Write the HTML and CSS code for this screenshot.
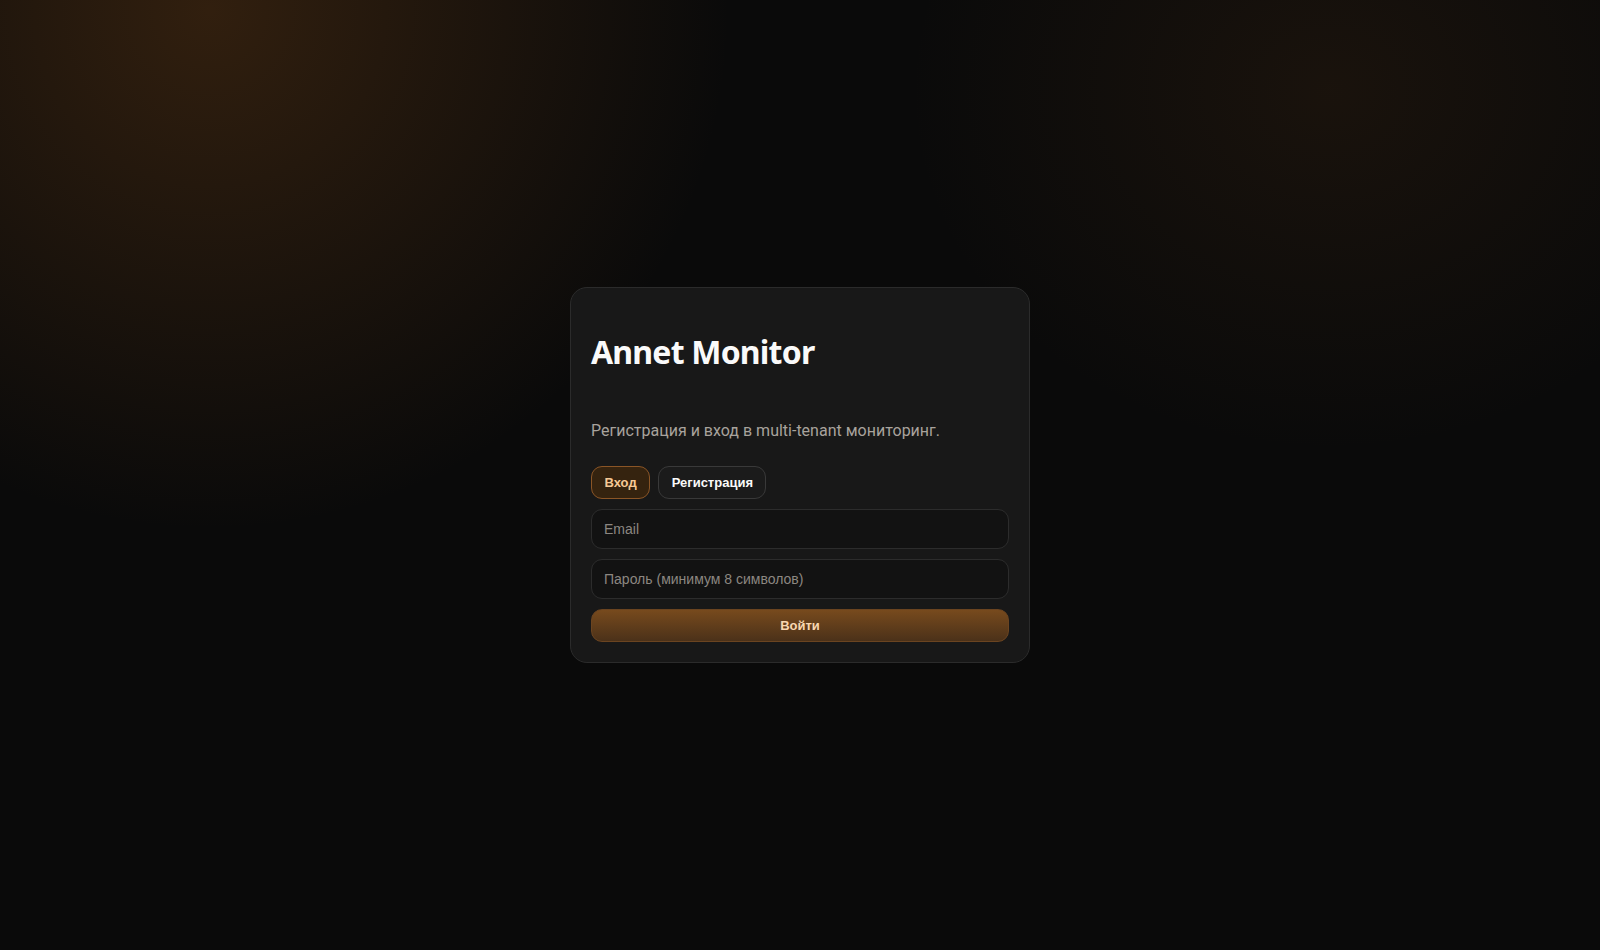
FILE: index.html
```html
<!DOCTYPE html>
<html lang="ru">
<head>
<meta charset="utf-8">
<title>Annet Monitor</title>
<link rel="stylesheet" href="styles.css">
</head>
<body>
<main class="page">
  <section class="card">
    <h1 class="title">Annet Monitor</h1>
    <p class="subtitle">Регистрация и вход в multi-tenant мониторинг.</p>
    <div class="tabs">
      <button class="tab tab-active" type="button">Вход</button>
      <button class="tab" type="button">Регистрация</button>
    </div>
    <form class="form">
      <input class="field" type="email" placeholder="Email">
      <input class="field" type="password" placeholder="Пароль (минимум 8 символов)">
      <button class="submit" type="button">Войти</button>
    </form>
  </section>
</main>
</body>
</html>
```
FILE: styles.css
```css
* { box-sizing: border-box; }
html, body { height: 100%; }
body {
  margin: 0;
  background-color: #0a0a0a;
  background-image:
    radial-gradient(ellipse 520px 520px at 210px 10px, rgba(140, 80, 25, 0.30), rgba(140, 80, 25, 0) 100%),
    radial-gradient(ellipse 420px 360px at 1330px 90px, rgba(120, 70, 25, 0.14), rgba(120, 70, 25, 0) 100%);
  font-family: Roboto, "Noto Sans", sans-serif;
  color: #f5f5f5;
}
.page {
  min-height: 100%;
  display: flex;
  justify-content: center;
  align-items: flex-start;
  padding-top: 287px;
}
.card {
  width: 460px;
  background: #181818;
  border: 1px solid #2b2b2b;
  border-radius: 17px;
  padding: 20px;
}
.title {
  margin: 22px 0 0;
  font-family: "Noto Sans", "Open Sans", sans-serif;
  font-size: 32px;
  line-height: 44px;
  font-weight: 700;
  letter-spacing: -0.8px;
  color: #fafafa;
}
.subtitle {
  margin: 45px 0 0;
  font-size: 16px;
  line-height: 24px;
  color: #a8a39d;
}
.tabs {
  display: flex;
  gap: 8px;
  margin-top: 23px;
}
.tab {
  height: 33px;
  padding: 0 12.5px;
  border-radius: 11px;
  border: 1px solid #393939;
  background: #1b1b1b;
  color: #fafafa;
  font-family: "Liberation Sans", Arial, sans-serif;
  font-weight: 700;
  font-size: 13px;
}
.tab-active {
  background: #35230f;
  border-color: #8a5526;
  color: #f6c995;
}
.form {
  display: flex;
  flex-direction: column;
  gap: 10px;
  margin-top: 10px;
}
.field {
  height: 40px;
  width: 100%;
  padding: 0 12px;
  border-radius: 11px;
  border: 1px solid #2c2c2c;
  background: #121212;
  color: #e5e5e5;
  font-family: "Liberation Sans", Arial, sans-serif;
  font-size: 14px;
}
.field::placeholder { color: #8c8781; }
.submit {
  height: 33px;
  width: 100%;
  border-radius: 11px;
  border: 1px solid #6b4420;
  background: linear-gradient(180deg, #774a1d 0%, #4b3119 100%);
  color: #f8d7b0;
  font-family: "Liberation Sans", Arial, sans-serif;
  font-weight: 700;
  font-size: 13px;
}
```
